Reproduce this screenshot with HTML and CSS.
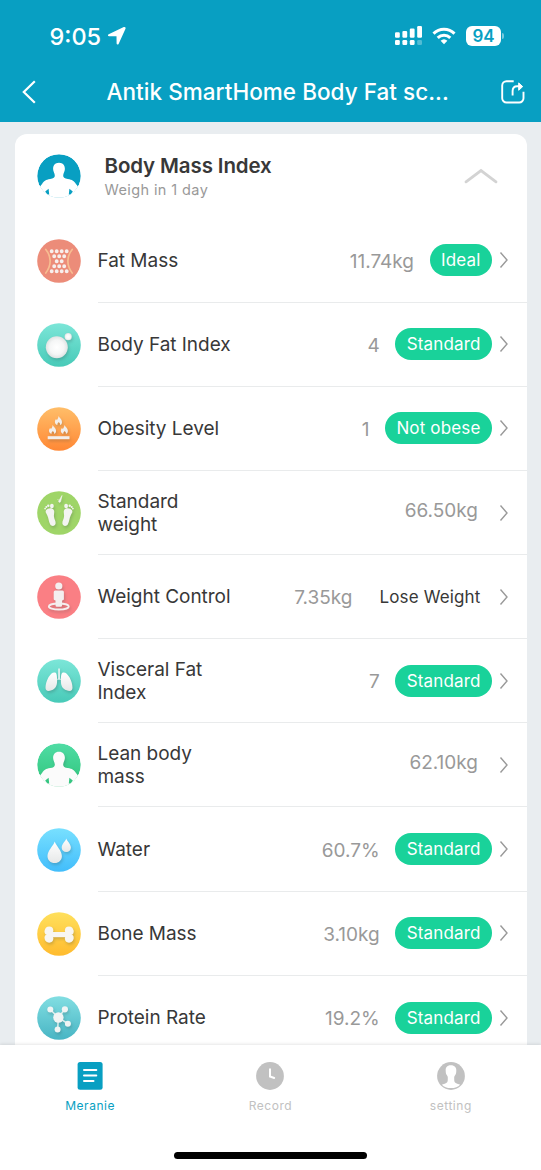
FILE: index.html
```html
<!DOCTYPE html>
<html lang="en">
<head>
<meta charset="utf-8">
<meta name="viewport" content="width=device-width, initial-scale=1">
<title>Antik SmartHome Body Fat scale</title>
<link rel="stylesheet" href="styles.css">
</head>
<body>
<svg class="defs" width="0" height="0" aria-hidden="true">
  <defs>
    <linearGradient id="g-teal" x1="0" y1="0" x2="0" y2="1"><stop offset="0" stop-color="#7ce6d8"/><stop offset="1" stop-color="#48cab8"/></linearGradient>
    <linearGradient id="g-orange" x1="0" y1="0" x2="0" y2="1"><stop offset="0" stop-color="#ffbe69"/><stop offset="1" stop-color="#ff8835"/></linearGradient>
    <linearGradient id="g-green" x1="0" y1="0" x2="0" y2="1"><stop offset="0" stop-color="#50dca5"/><stop offset="1" stop-color="#2fc57a"/></linearGradient>
    <linearGradient id="g-blue" x1="0" y1="0" x2="0" y2="1"><stop offset="0" stop-color="#78e0ff"/><stop offset="1" stop-color="#42bdfb"/></linearGradient>
    <linearGradient id="g-yellow" x1="0" y1="0" x2="0" y2="1"><stop offset="0" stop-color="#ffe05c"/><stop offset="1" stop-color="#ffbb2e"/></linearGradient>
    <linearGradient id="g-cyan" x1="0" y1="0" x2="0" y2="1"><stop offset="0" stop-color="#82dee2"/><stop offset="1" stop-color="#48b5c4"/></linearGradient>
    <linearGradient id="g-white" x1="0" y1="0" x2="0" y2="1"><stop offset="0" stop-color="#ffffff"/><stop offset="1" stop-color="#e6e8e8"/></linearGradient>
    <radialGradient id="g-ball"><stop offset="0" stop-color="#ffffff"/><stop offset=".65" stop-color="#f5f6f6"/><stop offset="1" stop-color="#dfe3e3"/></radialGradient>
    <clipPath id="disc"><circle cx="22" cy="22" r="21.8"/></clipPath>
    <path id="torso" d="M22 8.800c-4 0-6 2.800-5.900 6.300.1 2.700 1.500 4.200 1.700 6.200.2 2.400-1.400 3.300-4.600 3.700-4.700.6-6.200 2.200-8 4.700L0 36.500V44h44v-7.500l-5.200-6.800c-1.800-2.500-3.300-4.100-8-4.700-3.200-.4-4.800-1.300-4.600-3.700.2-2 1.600-3.500 1.700-6.200.1-3.500-1.900-6.300-5.900-6.300z"/>
    <path id="gaps" d="M11.600 34.800l.6 5.700H10.400L8.200 37.600zM32.400 34.800l-.6 5.700h1.800l2.200-2.900z"/>
    <path id="flame" d="M0-4.600c.6 1.500 3.500 3.200 3.500 5.800 0 1.800-.9 2.800-2 3.200.3-1.300-.3-2.100-1.300-3-.8.9-1.500 1.700-1.300 3C-2.400 4-3.600 2.900-3.600 1.200c0-1.300.6-2 1.200-2.800l.7 1.100C-.7-1.500-.1-2.900 0-4.600z"/>
    <symbol id="chevron" viewBox="0 0 10 18"><path d="M1.500 1.500 8 9 1.500 16.500" fill="none" stroke="#999" stroke-width="1.400"/></symbol>
  </defs>
</svg>

<div class="app">
  <header class="top">
    <div class="status">
      <div class="clock">
        <span class="time">9:05</span>
        <svg width="20" height="20" viewBox="0 0 20 20"><path d="M1.700 8.200 16.800 1.100c1.200-.5 2.200.4 1.700 1.700L11.600 17.900c-.5 1.100-1.900.9-2-.3L9.500 10.300l-7.400-.1c-1.300-.1-1.600-1.400-.4-2z" fill="#fff"/></svg>
      </div>
      <div class="indicators">
        <svg width="28" height="20" viewBox="0 0 28 20" fill="#fff">
          <rect x="0" y="6.200" width="4.800" height="5.600" rx="1.200"/><rect x="7.400" y="4.900" width="4.800" height="6.900" rx="1.200"/><rect x="14.800" y="2.600" width="4.800" height="9.200" rx="1.200"/><rect x="22.200" y="0" width="4.800" height="11.800" rx="1.200"/>
          <rect x="0" y="14" width="4.800" height="5" rx="1.300"/><rect x="7.400" y="14" width="4.800" height="5" rx="1.300"/><rect x="14.800" y="14" width="4.800" height="5" rx="1.300"/><rect x="22.200" y="14" width="4.800" height="5" rx="1.300" opacity=".3"/>
        </svg>
        <svg class="wifi" width="24" height="18" viewBox="0 0 24 18" fill="none" stroke="#fff" stroke-width="3">
          <path d="M1.500 6.600a15 15 0 0 1 21 0"/><path d="M5.700 10.900a9 9 0 0 1 12.600 0"/><path d="M12 17.300 8.600 13.800a5 5 0 0 1 6.800 0z" fill="#fff" stroke="none"/>
        </svg>
        <span class="battery">94</span><span class="battery-tip"></span>
      </div>
    </div>
    <nav class="titlebar">
      <svg width="14" height="24" viewBox="0 0 14 24"><path d="M12.800 1.200 1.800 12l11 10.800" fill="none" stroke="#fff" stroke-width="2.200"/></svg>
      <h1 class="title">Antik SmartHome Body Fat sc...</h1>
      <svg width="24" height="24" viewBox="0 0 24 24" fill="none" stroke="#fff" stroke-width="1.900"><path d="M12.700 1.200H5.500A4.300 4.300 0 0 0 1.200 5.500v12.700a4.300 4.300 0 0 0 4.300 4.300h12.700a4.300 4.300 0 0 0 4.300-4.300v-6.500"/><path d="M11.600 15.500V11c0-3.300 1.500-4.800 4.600-4.800h2.500"/><path d="m17.700 2.900 4 3.700-4 3.700z" fill="#fff" stroke-width="1"/></svg>
    </nav>
  </header>

  <main class="content">
    <section class="card">
      <div class="card-head">
        <svg class="icon" viewBox="0 0 44 44"><g clip-path="url(#disc)"><circle cx="22" cy="22" r="21.800" fill="#089fc2"/><use href="#torso" fill="#fff"/><use href="#gaps" fill="#089fc2"/></g></svg>
        <div class="head-text"><h2 class="head-title">Body Mass Index</h2><p class="head-sub">Weigh in 1 day</p></div>
        <svg class="collapse" width="34" height="16" viewBox="0 0 34 16"><path d="M2 13.800 17 2.600l15 11.200" fill="none" stroke="#d3d3d3" stroke-width="2.800" stroke-linecap="round"/></svg>
      </div>

      <div class="row">
        <svg class="icon" viewBox="0 0 44 44"><circle cx="22" cy="22" r="21.800" fill="#ec8c79"/><path d="M8.800 10.500c5.800 7 5.800 16 0 23.500M35.200 10.500c-5.800 7-5.800 16 0 23.500" fill="none" stroke="#f7bd91" stroke-width="1.700" stroke-linecap="round"/><g class="dots"><path d="M14.700 12.200h15.100M17.200 17.200h10.100M19.700 22.200h5.100M17.200 27.200h10.100M14.700 32.200h15.100"/></g></svg>
        <div class="body"><span class="label">Fat Mass</span><span class="value">11.74kg</span><span class="badge">Ideal</span><svg class="go"><use href="#chevron"/></svg></div>
      </div>
      <div class="row">
        <svg class="icon" viewBox="0 0 44 44"><circle cx="22" cy="22" r="21.800" fill="url(#g-teal)"/><g class="lift" fill="url(#g-ball)"><circle cx="19.800" cy="24.300" r="11"/><circle cx="31.200" cy="13.700" r="3.600"/></g></svg>
        <div class="body"><span class="label">Body Fat Index</span><span class="value">4</span><span class="badge">Standard</span><svg class="go"><use href="#chevron"/></svg></div>
      </div>
      <div class="row">
        <svg class="icon" viewBox="0 0 44 44"><circle cx="22" cy="22" r="21.800" fill="url(#g-orange)"/><g class="lift" fill="#f3eeea"><use href="#flame" x="21.500" y="13.700"/><use href="#flame" x="15.600" y="22.600"/><use href="#flame" x="27.400" y="22.600"/><path d="M10.700 29.200h21.800v3H10.700z"/></g></svg>
        <div class="body"><span class="label">Obesity Level</span><span class="value">1</span><span class="badge">Not obese</span><svg class="go"><use href="#chevron"/></svg></div>
      </div>
      <div class="row">
        <svg class="icon" viewBox="0 0 44 44"><circle cx="22" cy="22" r="21.800" fill="#9fd568"/><g class="lift" fill="#f3f4f1"><g id="foot"><path d="M9 19.300c1.600-2.300 6.500-3 7.900 0 .9 2-.3 4 .1 6.500.3 2.500 1.900 4.400 1.600 6.700-.4 2.900-4.200 3.200-5.500.7-1.500-3-1.500-6-2.800-8.700-1-2-2.300-3.400-1.300-5.200z"/><circle cx="8.100" cy="17.600" r=".9"/><circle cx="9.300" cy="15.900" r="1"/><circle cx="11.300" cy="14.800" r="1.200"/><ellipse cx="14.900" cy="15" rx="1.900" ry="2.200"/></g><use href="#foot" transform="matrix(-1 0 0 1 44 0)"/><path d="m25 4.500-3.200 5.400c-.6 1.300.9 2 1.700.9zM20.500 8l1.500 1.500" stroke="#f3f4f1" stroke-width=".6"/></g></svg>
        <div class="body"><span class="label">Standard<br>weight</span><span class="value solo">66.50kg</span><svg class="go"><use href="#chevron"/></svg></div>
      </div>
      <div class="row">
        <svg class="icon" viewBox="0 0 44 44"><circle cx="22" cy="22" r="21.800" fill="#fa7f84"/><g class="lift" fill="#f4efef"><ellipse cx="21.800" cy="31.500" rx="10" ry="3" fill="none" stroke="#f4efef" stroke-width="1.800"/><circle cx="21.800" cy="11" r="3.600"/><path d="M18.200 15.500h7.200q1.500 0 1.500 1.500v7.200q0 1-1.800 1.300v4.700q0 1.500-1.400 1.500h-3.800q-1.400 0-1.400-1.500v-4.700q-1.800-.3-1.800-1.300V17q0-1.500 1.500-1.500z"/></g></svg>
        <div class="body"><span class="label">Weight Control</span><span class="value">7.35kg</span><span class="badge plain">Lose Weight</span><svg class="go"><use href="#chevron"/></svg></div>
      </div>
      <div class="row">
        <svg class="icon" viewBox="0 0 44 44"><circle cx="22" cy="22" r="21.800" fill="url(#g-teal)"/><g class="lift" fill="url(#g-white)"><path d="M18 13.500c1.800.6 2.100 3.500 2.100 7.500 0 4.500-.6 6.700-2.900 8.700-2.400 2-6.500 3.100-8 1.400-1.700-2.100 0-8.600 2.300-12.800 1.900-3.300 4.300-5.400 6.500-4.800zM26 13.500c-1.800.6-2.100 3.500-2.100 7.500 0 4.500.6 6.700 2.900 8.700 2.400 2 6.500 3.100 8 1.400 1.700-2.100 0-8.600-2.300-12.800-1.900-3.300-4.300-5.400-6.500-4.800z"/><path d="M21.100 9.500h1.900v9.700l1.200 1.600h-4.300l1.200-1.600z" fill="#d7f0ed"/></g></svg>
        <div class="body"><span class="label">Visceral Fat<br>Index</span><span class="value">7</span><span class="badge">Standard</span><svg class="go"><use href="#chevron"/></svg></div>
      </div>
      <div class="row">
        <svg class="icon" viewBox="0 0 44 44"><g clip-path="url(#disc)"><circle cx="22" cy="22" r="21.800" fill="url(#g-green)"/><g class="lift"><use href="#torso" fill="#fbfbfb"/></g><use href="#gaps" fill="#35c681"/></g></svg>
        <div class="body"><span class="label">Lean body<br>mass</span><span class="value solo">62.10kg</span><svg class="go"><use href="#chevron"/></svg></div>
      </div>
      <div class="row">
        <svg class="icon" viewBox="0 0 44 44"><circle cx="22" cy="22" r="21.800" fill="url(#g-blue)"/><g class="lift" fill="url(#g-white)"><path d="M17.700 13.500c1 3.800 7.200 9.200 7.200 14.600 0 4.300-3 7-7.200 7s-7.200-2.700-7.200-7c0-5.400 6.200-10.800 7.200-14.600z"/><path d="M29.300 10.500c.6 2.400 4.600 5.500 4.600 8.900 0 2.800-2 4.500-4.600 4.500s-4.600-1.700-4.600-4.500c0-3.400 4-6.500 4.600-8.900z"/></g></svg>
        <div class="body"><span class="label">Water</span><span class="value">60.7%</span><span class="badge">Standard</span><svg class="go"><use href="#chevron"/></svg></div>
      </div>
      <div class="row">
        <svg class="icon" viewBox="0 0 44 44"><circle cx="22" cy="22" r="21.800" fill="url(#g-yellow)"/><g class="lift" fill="#f8f6f2"><circle cx="12.200" cy="18.600" r="4.100"/><circle cx="12.200" cy="26.600" r="4.100"/><circle cx="32" cy="18.600" r="4.100"/><circle cx="32" cy="26.600" r="4.100"/><circle cx="11" cy="19.500" r="3.500"/><circle cx="11" cy="25.700" r="3.500"/><circle cx="33.200" cy="19.500" r="3.500"/><circle cx="33.200" cy="25.700" r="3.500"/><path d="M10 20h24.200v5.200H10z"/></g></svg>
        <div class="body"><span class="label">Bone Mass</span><span class="value">3.10kg</span><span class="badge">Standard</span><svg class="go"><use href="#chevron"/></svg></div>
      </div>
      <div class="row">
        <svg class="icon" viewBox="0 0 44 44"><circle cx="22" cy="22" r="21.800" fill="url(#g-cyan)"/><g class="lift"><path d="M13.300 13.500 21.300 21.500l6.300-8M21.300 21.500l9.400 6.200M21.300 21.500l-.6 12" stroke="#dcefee" stroke-width="1.500" fill="none"/><g fill="#f0f4f4"><circle cx="21.400" cy="21.500" r="5.200"/><circle cx="13.300" cy="13.500" r="3"/><circle cx="27.900" cy="13.300" r="3.100"/><circle cx="30.900" cy="27.800" r="3"/><circle cx="20.600" cy="33.600" r="3"/></g></g></svg>
        <div class="body"><span class="label">Protein Rate</span><span class="value">19.2%</span><span class="badge">Standard</span><svg class="go"><use href="#chevron"/></svg></div>
      </div>
    </section>
  </main>

  <footer class="tabbar">
    <nav class="tabs">
      <a class="tab active"><svg width="28" height="28" viewBox="0 0 28 28"><rect x="1.600" width="25" height="27.700" rx="2.500" fill="#089fc2"/><path d="M8 8h12.300M8 13.500h12.300M8 19h9.500" stroke="#fff" stroke-width="2" stroke-linecap="round"/></svg><span>Meranie</span></a>
      <a class="tab"><svg width="28" height="28" viewBox="0 0 28 28"><circle cx="14" cy="14" r="13.900" fill="#c1c1c1"/><path d="M14 7.300v7.200l4.200 1.500" fill="none" stroke="#fff" stroke-width="2" stroke-linecap="round"/></svg><span>Record</span></a>
      <a class="tab"><svg width="28" height="28" viewBox="0 0 28 28"><circle cx="14" cy="14" r="13.900" fill="#c1c1c1"/><path d="M13.800 3.200c-4 0-5.400 2.500-5.100 5.500.1 2 .1 2.800.9 4.100.6 1 1.400 1.700 1.200 3.400 0 2.700 0 3.900-1.500 4.700-1.400.8-3 1-4.400 1.800 2 2.200 5 3.400 9 3.400s7.200-1.300 9.200-3.400c-1.400-.8-3-1-4.400-1.800-1.500-.8-1.500-2-1.500-4.700-.2-1.700.6-2.400 1.200-3.400.8-1.300.8-2.100.9-4.100.3-3-1.500-5.500-5.500-5.500z" fill="#fff"/></svg><span>setting</span></a>
    </nav>
    <div class="home-bar"></div>
  </footer>
</div>
</body>
</html>
```
FILE: styles.css
```css
* { box-sizing: border-box; }
body { margin: 0; font-family: Inter, "Liberation Sans", sans-serif; color: #383838; }
h1, h2, p { margin: 0; }
svg { display: block; flex: none; }
.defs { position: absolute; }

.app { display: flex; flex-direction: column; width: 541px; height: 1170px; overflow: hidden; background: #e9edf0; }

.top { flex: none; height: 122px; background: #089fc2; color: #fff; }
.status { display: flex; justify-content: space-between; height: 62px; padding: 14px 37px 4px 49.500px; align-items: center; }
.clock { display: flex; align-items: center; gap: 6px; }
.time { padding-top: 1px; font-size: 23.500px; line-height: 28px; font-weight: 500; }
.indicators { display: flex; align-items: center; }
.wifi { margin-left: 9px; }
.battery { width: 35px; height: 20px; margin-left: 10px; border-radius: 6px; background: #fff; color: #089fc2; font-size: 17px; line-height: 20px; font-weight: 600; text-align: center; }
.battery-tip { width: 2px; height: 6px; margin-left: 1px; border-radius: 0 2px 2px 0; background: #78c9dd; }
.titlebar { display: flex; align-items: center; height: 60px; padding: 0 16px 0 21.500px; }
.title { flex: 1; margin-left: 71px; font-size: 22.500px; line-height: 28px; font-weight: 500; letter-spacing: .04px; white-space: nowrap; }

.content { flex: 1; min-height: 0; padding: 12px 14px 0 14.500px; overflow: hidden; }
.card { border-radius: 12px; background: #fff; }
.card-head { display: flex; align-items: center; height: 84.700px; padding: 0 29.500px 0 22.500px; }
.icon { width: 44px; height: 44px; }
.head-text { flex: 1; margin-left: 23.500px; padding-top: 2px; }
.head-title { font-size: 20.500px; line-height: 26px; font-weight: 600; letter-spacing: -.12px; }
.head-sub { font-size: 14.500px; line-height: 22px; color: #999; letter-spacing: .4px; }

.row { display: flex; align-items: center; height: 84.120px; padding-left: 22.500px; }
.body { flex: 1; display: flex; align-items: center; height: 100%; margin-left: 16.500px; padding-right: 18px; border-bottom: 1px solid #e9ebec; }
.row:last-child .body { border-bottom: 0; }
.label { flex: 1; padding-top: 1px; font-size: 19px; line-height: 23.500px; letter-spacing: -.03px; white-space: nowrap; }
.value { padding-top: 3px; margin-right: 15.500px; font-size: 19px; line-height: 24px; color: #999; }
.solo { margin-right: 21px; padding: 0 0 4px; }
.badge { height: 32px; padding: 0 11.500px; border-radius: 16px; background: #19d29a; color: #fff; font-size: 17px; line-height: 33px; letter-spacing: .15px; white-space: nowrap; }
.plain { background: none; color: #383838; }
.go { width: 10px; height: 18px; margin-left: 7px; }
.solo + .go { margin-left: 0; }
.dots { fill: none; stroke: #f7efed; stroke-width: 3.900; stroke-linecap: round; stroke-dasharray: 0 5; }
.lift { filter: drop-shadow(1px 2px 1.500px rgba(40, 60, 60, .22)); }

.tabbar { position: relative; flex: none; display: flex; flex-direction: column; align-items: center; justify-content: space-between; height: 125px; padding: 17px 0 11px; background: #fff; box-shadow: 0 -1px 3px rgba(0, 0, 0, .1); }
.tabs { display: grid; grid-template-columns: repeat(3, 1fr); width: 541px; }
.tab { display: flex; flex-direction: column; align-items: center; gap: 7px; color: #c1c1c1; font-size: 12px; line-height: 17px; letter-spacing: .55px; }
.active { color: #089fc2; }
.home-bar { width: 193px; height: 7px; border-radius: 4px; background: #000; }
```
